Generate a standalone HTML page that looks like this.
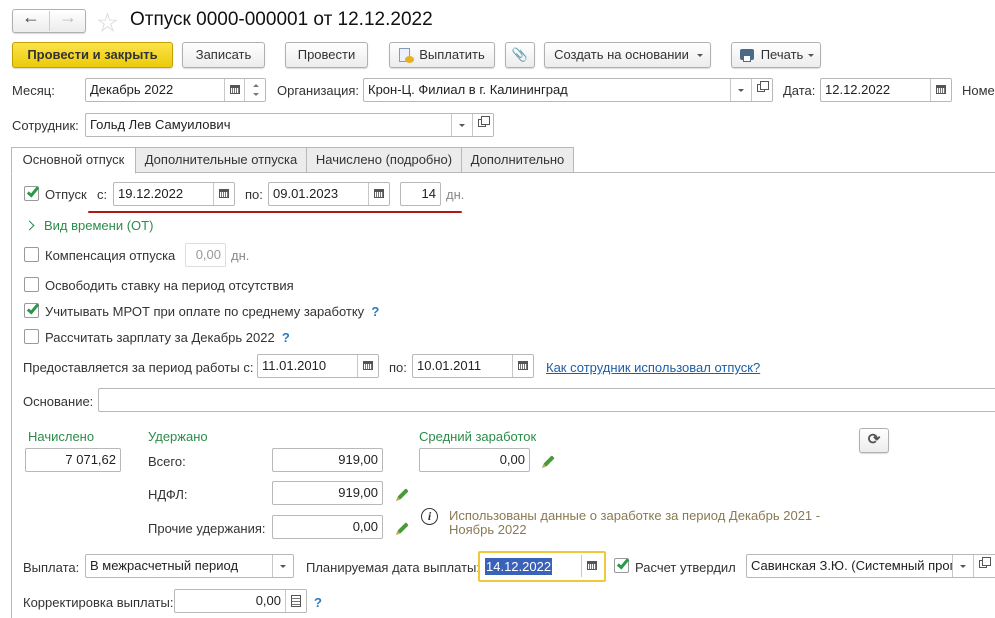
<!DOCTYPE html>
<html><head><meta charset="utf-8">
<style>
*{box-sizing:border-box;margin:0;padding:0}
body{width:995px;height:618px;overflow:hidden;background:#fff;font-family:"Liberation Sans","Noto Sans CJK SC",sans-serif;font-size:13px;color:#333;position:relative}
.a{position:absolute;white-space:nowrap}
.f{position:absolute;border:1px solid #b8b8b8;border-radius:2px;background:#fff;height:24px;line-height:22px;padding-left:4px;color:#222;overflow:hidden;white-space:nowrap}
.f.r{text-align:right;padding-right:4px}
.sb{position:absolute;top:0;bottom:0;width:21px;border-left:1px solid #c8c8c8;background:#fff}
.btn{position:absolute;height:26px;border:1px solid #b0b0b0;border-radius:3px;background:linear-gradient(#fff,#ececec);text-align:center;line-height:24px;color:#333;box-shadow:0 1px 1px rgba(0,0,0,.15)}
.cb{position:absolute;width:15px;height:15px;border:1px solid #999;border-radius:2px;background:#fff}
.ck{position:absolute;width:6px;height:12px;border-right:3px solid #2a9a4a;border-bottom:3px solid #2a9a4a;transform:rotate(40deg)}
.g{color:#2b8c4a}
.q{color:#2a7bc0;font-weight:bold}
.tab{position:absolute;top:147px;height:26px;border:1px solid #b8b8b8;background:#ececec;line-height:24px;text-align:center;color:#333}
.cal{position:absolute;left:5px;top:6px;width:10px;height:9px;border:1px solid #555;border-top:3px solid #555;background:repeating-linear-gradient(90deg,#fff 0 1px,#777 1px 2px)}
.dd{position:absolute;left:7px;top:10px;border-left:3px solid transparent;border-right:3px solid transparent;border-top:3px solid #555}
.op{position:absolute;left:5px;top:5px;width:8px;height:8px;border:1px solid #555}
.op:after{content:"";position:absolute;left:2px;top:-4px;width:7px;height:7px;border:1px solid #555;background:#fff}
.pen{position:absolute;width:12px;height:4px;background:#4a9a3a;transform:rotate(-45deg);border-radius:1px}
.pen:before{content:"";position:absolute;left:-4px;top:0;border-right:4px solid #c9a35a;border-top:2px solid transparent;border-bottom:2px solid transparent}
</style></head><body>

<div class="btn" style="left:12px;top:9px;width:74px;height:24px;"></div>
<div class="a" style="left:49px;top:11px;width:1px;height:20px;background:#ccc"></div>
<div class="a" style="left:22px;top:7px;font-size:18px;font-weight:bold;color:#444">&#8592;</div>
<div class="a" style="left:59px;top:7px;font-size:18px;font-weight:bold;color:#bbb">&#8594;</div>
<div class="a" style="left:97px;top:7px;font-size:21px;color:#d4d4d4">&#9734;</div>
<div class="a" style="left:130px;top:9px;font-size:19px;color:#111">Отпуск 0000-000001 от 12.12.2022</div>

<div class="btn" style="left:12px;top:42px;width:161px;background:linear-gradient(#fbe34a,#eccb0a);border-color:#c2a100;font-weight:bold;color:#333">Провести и закрыть</div>
<div class="btn" style="left:182px;top:42px;width:83px">Записать</div>
<div class="btn" style="left:285px;top:42px;width:83px">Провести</div>
<div class="btn" style="left:389px;top:42px;width:106px;padding-left:20px">Выплатить</div>
<div class="a" style="left:399px;top:48px;width:11px;height:14px;border:1px solid #8a9ab0;background:#eef2f8"></div>
<div class="a" style="left:405px;top:56px;width:9px;height:7px;border-radius:50%;background:#e6b020"></div>
<div class="btn" style="left:505px;top:42px;width:30px;color:#777">&#128206;</div>
<div class="btn" style="left:544px;top:42px;width:167px;padding-right:12px">Создать на основании</div>
<div class="a" style="left:697px;top:54px;border-left:3px solid transparent;border-right:3px solid transparent;border-top:3px solid #555"></div>
<div class="btn" style="left:731px;top:42px;width:90px;padding-left:12px">Печать</div>
<div class="a" style="left:740px;top:49px;width:14px;height:11px;background:#4a6a8a;border-radius:2px"></div>
<div class="a" style="left:743px;top:55px;width:8px;height:7px;background:#fff;border:1px solid #4a6a8a"></div>
<div class="a" style="left:808px;top:54px;border-left:3px solid transparent;border-right:3px solid transparent;border-top:3px solid #555"></div>

<div class="a" style="left:12px;top:83px">Месяц:</div>
<div class="f" style="left:85px;top:78px;width:181px">Декабрь 2022<div class="sb" style="right:20px"><div class="cal"></div></div><div class="sb" style="right:0;width:21px"><div class="a" style="left:8px;top:5px;border-left:3px solid transparent;border-right:3px solid transparent;border-bottom:3px solid #777"></div><div class="a" style="left:8px;top:14px;border-left:3px solid transparent;border-right:3px solid transparent;border-top:3px solid #777"></div></div></div>
<div class="a" style="left:277px;top:83px">Организация:</div>
<div class="f" style="left:363px;top:78px;width:410px">Крон-Ц. Филиал в г. Калининград<div class="sb" style="right:21px"><div class="dd"></div></div><div class="sb" style="right:0"><div class="op"></div></div></div>
<div class="a" style="left:783px;top:83px">Дата:</div>
<div class="f" style="left:820px;top:78px;width:132px">12.12.2022<div class="sb" style="right:0"><div class="cal"></div></div></div>
<div class="a" style="left:962px;top:83px">Номе</div>

<div class="a" style="left:12px;top:118px">Сотрудник:</div>
<div class="f" style="left:85px;top:113px;width:409px">Гольд Лев Самуилович<div class="sb" style="right:21px"><div class="dd"></div></div><div class="sb" style="right:0"><div class="op"></div></div></div>

<div class="a" style="left:11px;top:172px;width:984px;height:1px;background:#b8b8b8"></div>
<div class="a" style="left:11px;top:172px;width:1px;height:446px;background:#b8b8b8"></div>
<div class="tab" style="left:11px;width:125px;background:#fff;border-bottom-color:#fff;height:27px">Основной отпуск</div>
<div class="tab" style="left:135px;width:172px">Дополнительные отпуска</div>
<div class="tab" style="left:306px;width:156px">Начислено (подробно)</div>
<div class="tab" style="left:461px;width:113px">Дополнительно</div>

<div class="cb" style="left:24px;top:186px"></div><div class="ck" style="left:30px;top:185px"></div>
<div class="a" style="left:45px;top:187px">Отпуск</div>
<div class="a" style="left:97px;top:187px">с:</div>
<div class="f" style="left:113px;top:182px;width:122px">19.12.2022<div class="sb" style="right:0"><div class="cal"></div></div></div>
<div class="a" style="left:245px;top:187px">по:</div>
<div class="f" style="left:268px;top:182px;width:122px">09.01.2023<div class="sb" style="right:0"><div class="cal"></div></div></div>
<div class="f r" style="left:400px;top:182px;width:41px">14</div>
<div class="a" style="left:446px;top:187px;color:#888">дн.</div>
<div class="a" style="left:88px;top:211px;width:374px;height:2px;background:#b01818;border-radius:1px"></div>

<div class="a" style="left:26px;top:222px;width:7px;height:7px;border-right:1.5px solid #2b8c4a;border-top:1.5px solid #2b8c4a;transform:rotate(45deg)"></div>
<div class="a g" style="left:44px;top:218px">Вид времени (ОТ)</div>

<div class="cb" style="left:24px;top:247px"></div>
<div class="a" style="left:45px;top:248px">Компенсация отпуска</div>
<div class="f r" style="left:185px;top:243px;width:41px;color:#999;border-color:#ddd">0,00</div>
<div class="a" style="left:231px;top:248px;color:#888">дн.</div>

<div class="cb" style="left:24px;top:277px"></div>
<div class="a" style="left:45px;top:278px">Освободить ставку на период отсутствия</div>
<div class="cb" style="left:24px;top:303px"></div><div class="ck" style="left:30px;top:302px"></div>
<div class="a" style="left:45px;top:304px">Учитывать МРОТ при оплате по среднему заработку <span class="q">&nbsp;?</span></div>
<div class="cb" style="left:24px;top:329px"></div>
<div class="a" style="left:45px;top:330px">Рассчитать зарплату за Декабрь 2022 <span class="q">&nbsp;?</span></div>

<div class="a" style="left:23px;top:360px">Предоставляется за период работы с:</div>
<div class="f" style="left:257px;top:354px;width:122px">11.01.2010<div class="sb" style="right:0"><div class="cal"></div></div></div>
<div class="a" style="left:389px;top:360px">по:</div>
<div class="f" style="left:412px;top:354px;width:122px">10.01.2011<div class="sb" style="right:0"><div class="cal"></div></div></div>
<div class="a" style="left:546px;top:360px;color:#1c5ea8;text-decoration:underline">Как сотрудник использовал отпуск?</div>

<div class="a" style="left:23px;top:394px">Основание:</div>
<div class="f" style="left:98px;top:388px;width:905px"></div>

<div class="a g" style="left:28px;top:429px">Начислено</div>
<div class="a g" style="left:148px;top:429px">Удержано</div>
<div class="a g" style="left:419px;top:429px">Средний заработок</div>
<div class="btn" style="left:859px;top:428px;width:30px;height:25px;color:#555;font-weight:bold;font-size:15px;line-height:22px">&#10227;</div>

<div class="f r" style="left:25px;top:448px;width:96px">7 071,62</div>
<div class="a" style="left:148px;top:454px">Всего:</div>
<div class="f r" style="left:272px;top:448px;width:111px">919,00</div>
<div class="f r" style="left:419px;top:448px;width:111px">0,00</div>
<div class="pen" style="left:543px;top:459px"></div>

<div class="a" style="left:148px;top:487px">НДФЛ:</div>
<div class="f r" style="left:272px;top:481px;width:111px">919,00</div>
<div class="pen" style="left:397px;top:492px"></div>

<div class="a" style="left:148px;top:521px">Прочие удержания:</div>
<div class="f r" style="left:272px;top:515px;width:111px">0,00</div>
<div class="pen" style="left:397px;top:526px"></div>

<div class="a" style="left:421px;top:508px;width:17px;height:17px;border:1.5px solid #333;border-radius:50%;text-align:center;font:bold italic 12px/14px 'Liberation Serif',serif;color:#333">i</div>
<div class="a" style="left:449px;top:509px;color:#8a7a52;line-height:14px">Использованы данные о заработке за период Декабрь 2021 -<br>Ноябрь 2022</div>

<div class="a" style="left:23px;top:560px">Выплата:</div>
<div class="f" style="left:85px;top:554px;width:209px">В межрасчетный период<div class="sb" style="right:0"><div class="dd"></div></div></div>
<div class="a" style="left:306px;top:560px">Планируемая дата выплаты:</div>
<div class="a" style="left:478px;top:551px;width:128px;height:31px;border:2px solid #f0c93a;border-radius:2px;background:#fff"></div>
<div class="a" style="left:485px;top:558px;background:#3a62b8;color:#fff;padding:0 1px;line-height:17px">14.12.2022</div>
<div class="a" style="left:581px;top:555px;width:1px;height:22px;background:#c8c8c8"></div>
<div class="a" style="left:582px;top:555px;width:20px;height:22px"><div class="cal"></div></div>
<div class="cb" style="left:614px;top:558px"></div><div class="ck" style="left:620px;top:557px"></div>
<div class="a" style="left:635px;top:560px">Расчет утвердил</div>
<div class="f" style="left:746px;top:554px;width:252px">Савинская З.Ю. (Системный прог<div class="sb" style="right:24px"><div class="dd"></div></div><div class="sb" style="right:3px"><div class="op"></div></div></div>

<div class="a" style="left:23px;top:595px">Корректировка выплаты:</div>
<div class="f r" style="left:174px;top:589px;width:133px;padding-right:25px">0,00<div class="sb" style="right:0"><div class="a" style="left:5px;top:5px;width:10px;height:12px;border:1px solid #555;background:repeating-linear-gradient(#fff 0 2px,#777 2px 3px)"></div></div></div>
<div class="a q" style="left:314px;top:595px">?</div>

</body></html>
